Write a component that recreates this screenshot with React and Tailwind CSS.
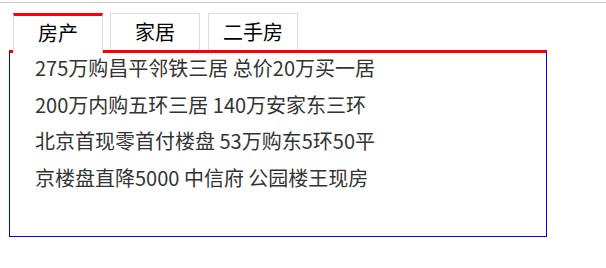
export default function App() {
  const tabs = ["房产", "家居", "二手房"];
  const items = [
    "275万购昌平邻铁三居 总价20万买一居",
    "200万内购五环三居 140万安家东三环",
    "北京首现零首付楼盘 53万购东5环50平",
    "京楼盘直降5000 中信府 公园楼王现房",
  ];
  return (
    <div
      className="w-[606px] h-[268px] bg-white"
      style={{ fontFamily: '"Noto Sans CJK SC", "Noto Sans", sans-serif' }}
    >
      <div className="h-[2px]" />
      <div className="h-px bg-[#c8c8c8]" />
      <div className="ml-[9px] mt-[10px] w-[538px]">
        <div className="relative z-10 flex items-end pl-[4px]">
          <div className="mr-[7px] h-[40px] -mb-[3px] w-[90px] border-x border-t-[3px] border-x-[#dddddd] border-t-[#ff0000] bg-white text-center text-[20px] leading-[33px] text-black">
            {tabs[0]}
          </div>
          <div className="mr-[8px] h-[37px] w-[90px] border-x border-t border-[#dddddd] bg-white text-center text-[20px] leading-[35px] text-black">
            {tabs[1]}
          </div>
          <div className="h-[37px] w-[90px] border-x border-t border-[#dddddd] bg-white text-center text-[20px] leading-[35px] text-black">
            {tabs[2]}
          </div>
        </div>
        <div className="h-[187px] border border-t-[3px] border-x-[#0000ff] border-b-[#0000ff] border-t-[#ff0000] pl-[25px]">
          <div className="flex flex-col gap-[7.5px] text-[20px] leading-[29px] text-[#333333]">
            {items.map((t) => (
              <div key={t} className="whitespace-nowrap">
                {t}
              </div>
            ))}
          </div>
        </div>
      </div>
    </div>
  );
}
